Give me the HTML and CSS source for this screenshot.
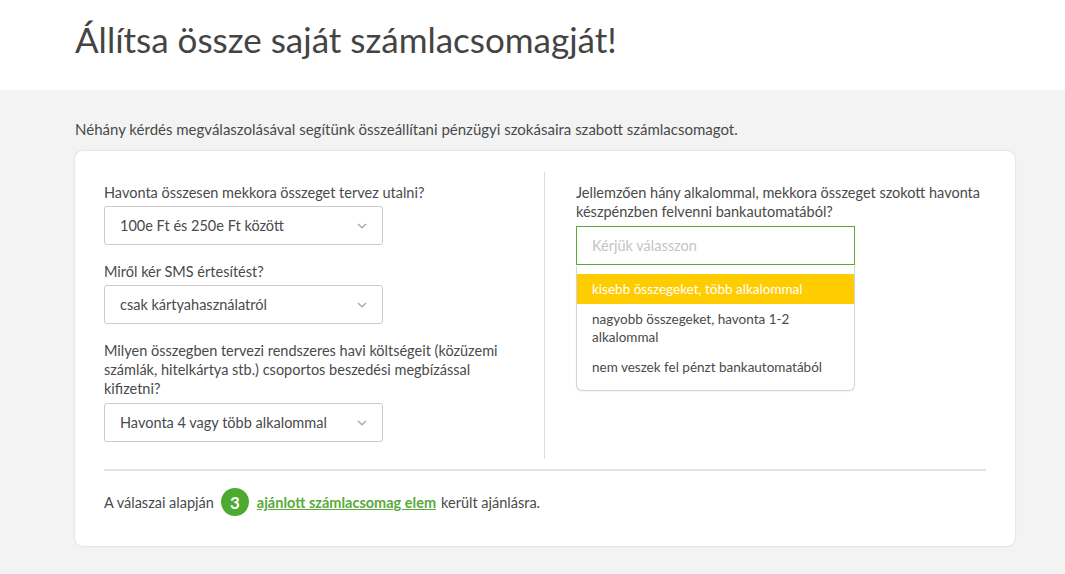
FILE: index.html
```html
<!DOCTYPE html>
<html lang="hu">
  <head>
    <meta charset="UTF-8" />
    <meta name="viewport" content="width=device-width, initial-scale=1.0" />
    <title>Számlacsomag</title>
    <link rel="stylesheet" href="styles.css">
  </head>
  <body>
    <header class="page-header">
      <h1>Állítsa össze saját számlacsomagját!</h1>
    </header>
    <main class="content">
      <p class="intro">Néhány kérdés megválaszolásával segítünk összeállítani pénzügyi szokásaira szabott számlacsomagot.</p>
      <div class="card">
        <div class="columns">
          <div class="col col-left">
            <div class="field">
              <label>Havonta összesen mekkora összeget tervez utalni?</label>
              <div class="select">
                <span>100e Ft és 250e Ft között</span>
                <svg class="chevron" width="10" height="6" viewBox="0 0 10 6"><path d="M1 1l4 3.8L9 1" fill="none" stroke="#aaa" stroke-width="1.5"/></svg>
              </div>
            </div>
            <div class="field">
              <label>Miről kér SMS értesítést?</label>
              <div class="select">
                <span>csak kártyahasználatról</span>
                <svg class="chevron" width="10" height="6" viewBox="0 0 10 6"><path d="M1 1l4 3.8L9 1" fill="none" stroke="#aaa" stroke-width="1.5"/></svg>
              </div>
            </div>
            <div class="field last">
              <label>Milyen összegben tervezi rendszeres havi költségeit (közüzemi számlák, hitelkártya stb.) csoportos beszedési megbízással kifizetni?</label>
              <div class="select">
                <span>Havonta 4 vagy több alkalommal</span>
                <svg class="chevron" width="10" height="6" viewBox="0 0 10 6"><path d="M1 1l4 3.8L9 1" fill="none" stroke="#aaa" stroke-width="1.5"/></svg>
              </div>
            </div>
          </div>
          <div class="col col-right">
            <div class="field">
              <label>Jellemzően hány alkalommal, mekkora összeget szokott havonta készpénzben felvenni bankautomatából?</label>
              <div class="select open">
                <span class="placeholder">Kérjük válasszon</span>
              </div>
              <ul class="options">
                <li class="active">kisebb összegeket, több alkalommal</li>
                <li>nagyobb összegeket, havonta 1-2 alkalommal</li>
                <li>nem veszek fel pénzt bankautomatából</li>
              </ul>
            </div>
          </div>
        </div>
        <div class="result">
          A válaszai alapján
          <span class="badge">3</span>
          <a href="#">ajánlott számlacsomag elem</a>
          <span class="tail">került ajánlásra.</span>
        </div>
      </div>
    </main>
  </body>
</html>
```

FILE: styles.css
```css
* {
  box-sizing: border-box;
}

html,
body {
  margin: 0;
  height: 100%;
}

body {
  font-family: Lato, "Open Sans", sans-serif;
  font-size: 14.5px;
  color: #4a4a4a;
  background-color: #f3f3f3;
}

.page-header {
  background-color: #fff;
  height: 90px;
  padding: 16px 0 0 75px;
}

.page-header h1 {
  margin: 0;
  font-size: 35px;
  font-weight: 400;
  line-height: 46px;
  color: #444;
}

.content {
  margin-left: 75px;
  width: 940px;
}

.intro {
  margin: 0;
  padding: 30px 0 12px;
  font-size: 15px;
  line-height: 19px;
}

.card {
  background-color: #fff;
  border-radius: 8px;
  box-shadow: 0 0 2px rgba(0, 0, 0, 0.18);
  padding: 21px 29px 0;
}

.columns {
  display: grid;
  grid-template-columns: 441px 1fr;
}

.col {
  padding-top: 11px;
}

.col-left {
  border-right: 1px solid #ddd;
}

.col-right {
  padding-left: 31px;
}

.field {
  margin-bottom: 17px;
}

.field label {
  display: block;
  line-height: 19px;
  margin-bottom: 4px;
  padding-right: 30px;
}

.col-right .field label {
  padding-right: 0;
  margin-bottom: 5px;
}

.select {
  width: 279px;
  height: 39px;
  border: 1px solid #ccc;
  border-radius: 3px;
  display: flex;
  align-items: center;
  justify-content: space-between;
  padding: 0 15px;
  color: #4a4a4a;
}

.field.last .select {
  margin-top: 5px;
}

.select.open {
  border-color: #5aaa3a;
  border-radius: 0;
}

.placeholder {
  color: #c4c4c4;
}

.options {
  list-style: none;
  margin: 1px 0 0;
  padding: 8px 0;
  width: 279px;
  border: 1px solid #d4d4d4;
  border-top: none;
  border-radius: 0 0 6px 6px;
  box-shadow: 0 1px 2px rgba(0, 0, 0, 0.06);
}

.options li {
  padding: 6px 20px 6px 15px;
  line-height: 18px;
  font-size: 13.5px;
}

.options li.active {
  background-color: #ffcc00;
  color: #fff;
}

.result {
  margin-top: 10px;
  border-top: 2px solid #e2e2e2;
  padding: 17px 0 30px;
  display: flex;
  align-items: center;
}

.badge {
  width: 28px;
  height: 28px;
  margin: 0 8px 0 7px;
  border-radius: 50%;
  background-color: #4caa2e;
  color: #fff;
  font-weight: 700;
  font-size: 17px;
  display: inline-flex;
  align-items: center;
  justify-content: center;
}

.result a {
  color: #5aaa3a;
  font-weight: 700;
  text-decoration: underline;
}

.tail {
  margin-left: 5px;
}
```
